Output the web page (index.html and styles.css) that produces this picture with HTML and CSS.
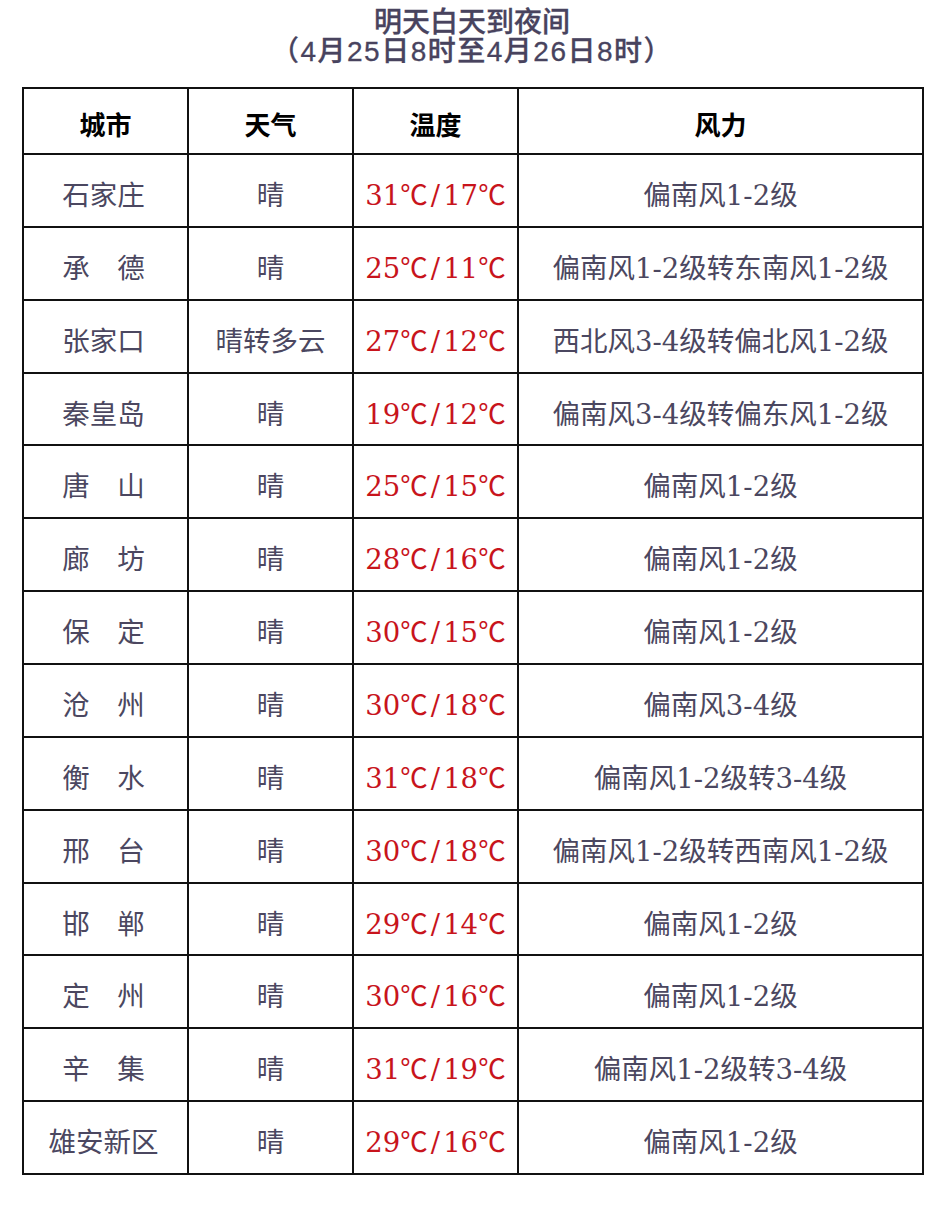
FILE: index.html
```html
<!DOCTYPE html>
<html lang="zh-CN">
<head>
<meta charset="utf-8">
<title>明天白天到夜间</title>
<link rel="stylesheet" href="styles.css">
</head>
<body>
<div class="page">
  <div class="title">
    <div class="title-line">明天白天到夜间</div>
    <div class="title-line sub">（4月25日8时至4月26日8时）</div>
  </div>
  <table class="forecast">
    <colgroup>
      <col class="c-city"><col class="c-wx"><col class="c-temp"><col class="c-wind">
    </colgroup>
    <thead>
      <tr><th>城市</th><th>天气</th><th>温度</th><th>风力</th></tr>
    </thead>
    <tbody>
      <tr><td class="city">石家庄</td><td>晴</td><td class="temp">31<span class="deg">℃</span><span class="sl">/</span>17<span class="deg">℃</span></td><td>偏南风1-2级</td></tr>
      <tr><td class="city">承　德</td><td>晴</td><td class="temp">25<span class="deg">℃</span><span class="sl">/</span>11<span class="deg">℃</span></td><td>偏南风1-2级转东南风1-2级</td></tr>
      <tr><td class="city">张家口</td><td>晴转多云</td><td class="temp">27<span class="deg">℃</span><span class="sl">/</span>12<span class="deg">℃</span></td><td>西北风3-4级转偏北风1-2级</td></tr>
      <tr><td class="city">秦皇岛</td><td>晴</td><td class="temp">19<span class="deg">℃</span><span class="sl">/</span>12<span class="deg">℃</span></td><td>偏南风3-4级转偏东风1-2级</td></tr>
      <tr><td class="city">唐　山</td><td>晴</td><td class="temp">25<span class="deg">℃</span><span class="sl">/</span>15<span class="deg">℃</span></td><td>偏南风1-2级</td></tr>
      <tr><td class="city">廊　坊</td><td>晴</td><td class="temp">28<span class="deg">℃</span><span class="sl">/</span>16<span class="deg">℃</span></td><td>偏南风1-2级</td></tr>
      <tr><td class="city">保　定</td><td>晴</td><td class="temp">30<span class="deg">℃</span><span class="sl">/</span>15<span class="deg">℃</span></td><td>偏南风1-2级</td></tr>
      <tr><td class="city">沧　州</td><td>晴</td><td class="temp">30<span class="deg">℃</span><span class="sl">/</span>18<span class="deg">℃</span></td><td>偏南风3-4级</td></tr>
      <tr><td class="city">衡　水</td><td>晴</td><td class="temp">31<span class="deg">℃</span><span class="sl">/</span>18<span class="deg">℃</span></td><td>偏南风1-2级转3-4级</td></tr>
      <tr><td class="city">邢　台</td><td>晴</td><td class="temp">30<span class="deg">℃</span><span class="sl">/</span>18<span class="deg">℃</span></td><td>偏南风1-2级转西南风1-2级</td></tr>
      <tr><td class="city">邯　郸</td><td>晴</td><td class="temp">29<span class="deg">℃</span><span class="sl">/</span>14<span class="deg">℃</span></td><td>偏南风1-2级</td></tr>
      <tr><td class="city">定　州</td><td>晴</td><td class="temp">30<span class="deg">℃</span><span class="sl">/</span>16<span class="deg">℃</span></td><td>偏南风1-2级</td></tr>
      <tr><td class="city">辛　集</td><td>晴</td><td class="temp">31<span class="deg">℃</span><span class="sl">/</span>19<span class="deg">℃</span></td><td>偏南风1-2级转3-4级</td></tr>
      <tr><td class="city">雄安新区</td><td>晴</td><td class="temp">29<span class="deg">℃</span><span class="sl">/</span>16<span class="deg">℃</span></td><td>偏南风1-2级</td></tr>
    </tbody>
  </table>
</div>
</body>
</html>
```
FILE: styles.css
```css
html, body {
  margin: 0;
  padding: 0;
  background: #ffffff;
}

.page {
  width: 942px;
  padding: 0 0 0 22px;
  box-sizing: border-box;
  font-family: "DejaVu Serif", "Noto Sans CJK SC", serif;
}

.title {
  width: 900px;
  padding-top: 8px;
  text-align: center;
  color: #48435e;
  font-family: "Liberation Sans", "Noto Sans CJK SC", sans-serif;
  font-size: 28px;
  font-weight: 500;
  line-height: 29px;
  -webkit-text-stroke: 0.3px #48435e;
}

.title-line.sub {
  letter-spacing: 1.5px;
}

.forecast {
  margin-top: 21px;
  width: 900px;
  table-layout: fixed;
  border-collapse: collapse;
  border: 2px solid #111;
}

.c-city, .c-wx, .c-temp { width: 165px; }
.c-wind { width: 405px; }

.forecast th,
.forecast td {
  border: 2px solid #111;
  text-align: center;
  vertical-align: middle;
  padding: 0;
  white-space: nowrap;
}

.forecast thead tr { height: 66px; }

.forecast th {
  color: #000;
  font-family: "Noto Sans CJK SC", sans-serif;
  font-size: 26px;
  font-weight: 700;
  padding-top: 5px;
}

.forecast tbody tr { height: 72.86px; }

.forecast td {
  color: #4b4760;
  font-size: 27.5px;
  padding-top: 5px;
}

.forecast td.city {
  padding-right: 4px;
}

.forecast td.temp {
  color: #c8141c;
}

.deg {
  font-family: "Noto Sans CJK SC", sans-serif;
}

.sl {
  margin: 0 3px;
}
```
